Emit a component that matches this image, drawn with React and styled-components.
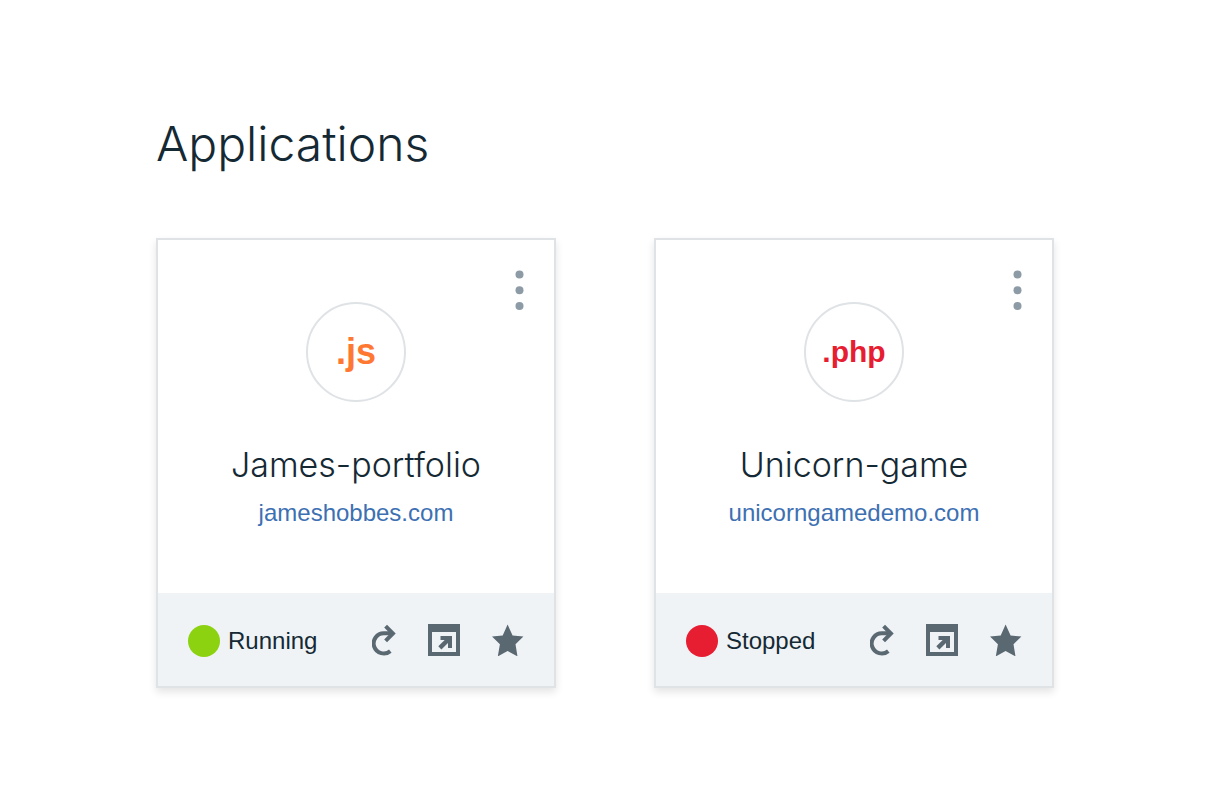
import React from "react";
import styled, { createGlobalStyle } from "styled-components";

const GlobalStyle = createGlobalStyle`
  *, *::before, *::after { box-sizing: border-box; }
  body {
    margin: 0;
    background: #ffffff;
    color: #152934;
    font-family: Inter, "Helvetica Neue", "Liberation Sans", sans-serif;
  }
`;

const Page = styled.main`
  padding: 112px 154px 112px 156px;
`;

const Title = styled.h1`
  margin: 0 0 62px;
  font-size: 48px;
  line-height: 64px;
  font-weight: 300;
`;

const Grid = styled.div`
  display: grid;
  grid-template-columns: repeat(auto-fit, minmax(360px, 1fr));
  gap: 98px;
`;

const Card = styled.article`
  display: flex;
  flex-direction: column;
  border: 2px solid #dfe3e6;
  background: #ffffff;
  box-shadow: 0 4px 8px rgba(0, 0, 0, 0.11);
`;

const CardBody = styled.div`
  display: flex;
  flex-direction: column;
  padding: 30px 30px 64px;
  text-align: center;
`;

const CardTop = styled.div`
  display: grid;
  grid-template-columns: 1fr auto 1fr;
  align-items: start;
`;

const Runtime = styled.div`
  grid-column: 2;
  display: flex;
  align-items: center;
  justify-content: center;
  width: 100px;
  height: 100px;
  margin-top: 32px;
  border: 2px solid #dfe3e6;
  border-radius: 50%;
  color: ${(p) => p.$color};
  font-family: "Liberation Sans", sans-serif;
  font-size: ${(p) => p.$size}px;
  line-height: 40px;
  font-weight: 700;
`;

const IconButton = styled.button`
  display: flex;
  padding: 0;
  border: 0;
  background: none;
  color: #5a6872;
  cursor: pointer;
`;

const MenuButton = styled(IconButton)`
  justify-self: end;
  color: #8c9ba5;
`;

const Name = styled.h2`
  margin: 39px 0 0;
  font-size: 34px;
  line-height: 48px;
  font-weight: 300;
`;

const SiteLink = styled.a`
  align-self: center;
  margin-top: 8px;
  color: #3d70b2;
  font-family: "Liberation Sans", sans-serif;
  font-size: 24px;
  line-height: 32px;
  text-decoration: none;
`;

const CardFooter = styled.footer`
  display: flex;
  align-items: center;
  justify-content: space-between;
  height: 93px;
  padding: 0 30px;
  background: #eff3f6;
`;

const Status = styled.div`
  display: flex;
  align-items: center;
  gap: 8px;
  padding-top: 2px;
  font-family: "Liberation Sans", sans-serif;
  font-size: 24px;
  line-height: 32px;
`;

const StatusDot = styled.span`
  width: 32px;
  height: 32px;
  border-radius: 50%;
  background: ${(p) => (p.$running ? "#8cd211" : "#e71d32")};
`;

const Actions = styled.div`
  display: flex;
  gap: 32px;
`;

const DotsIcon = () => (
  <svg width="9" height="40" viewBox="0 0 9 40" fill="currentColor" aria-hidden="true">
    <circle cx="4.5" cy="4.6" r="4" />
    <circle cx="4.5" cy="20.2" r="4" />
    <circle cx="4.5" cy="35.9" r="4" />
  </svg>
);

const RestartIcon = () => (
  <svg width="24" height="32" viewBox="0 0 24 32" fill="none" stroke="currentColor" strokeWidth="4" aria-hidden="true">
    <path d="M18.3 27.1A10.1 10.1 0 1 1 12 9.3H20.5" />
    <path d="M13.6 2.2L20.9 9.5L13.6 16.8" />
  </svg>
);

const OpenIcon = () => (
  <svg width="32" height="32" viewBox="0 0 32 32" fill="currentColor" aria-hidden="true">
    <path fillRule="evenodd" d="M0 0H32V32H0ZM4 8V28H28V8Z" />
    <path d="M12.5 12H24V24H20V19L13.4 25.5L10.3 22.3L16.7 16H12.5Z" />
  </svg>
);

const StarIcon = () => (
  <svg width="32" height="32" viewBox="0 0 32 32" fill="currentColor" aria-hidden="true">
    <path d="M15.6 0.6L20.6 11.4L31.4 12.5L23.5 20.3L25.5 32.4L15.6 27L5.8 32.4L7.9 20.3L0 12.5L10.7 11.4Z" />
  </svg>
);

const applications = [
  { name: "James-portfolio", site: "jameshobbes.com", runtime: ".js", color: "#ff7832", size: 36, running: true },
  { name: "Unicorn-game", site: "unicorngamedemo.com", runtime: ".php", color: "#e71d32", size: 30, running: false },
];

const ApplicationCard = ({ name, site, runtime, color, size, running }) => (
  <Card>
    <CardBody>
      <CardTop>
        <Runtime $color={color} $size={size}>{runtime}</Runtime>
        <MenuButton type="button" aria-label="More options"><DotsIcon /></MenuButton>
      </CardTop>
      <Name>{name}</Name>
      <SiteLink href={`#${site}`}>{site}</SiteLink>
    </CardBody>
    <CardFooter>
      <Status><StatusDot $running={running} />{running ? "Running" : "Stopped"}</Status>
      <Actions>
        <IconButton type="button" aria-label="Restart"><RestartIcon /></IconButton>
        <IconButton type="button" aria-label="Open"><OpenIcon /></IconButton>
        <IconButton type="button" aria-label="Favorite"><StarIcon /></IconButton>
      </Actions>
    </CardFooter>
  </Card>
);

export default function App() {
  return (
    <>
      <GlobalStyle />
      <Page>
        <Title>Applications</Title>
        <Grid>
          {applications.map((app) => <ApplicationCard key={app.name} {...app} />)}
        </Grid>
      </Page>
    </>
  );
}
